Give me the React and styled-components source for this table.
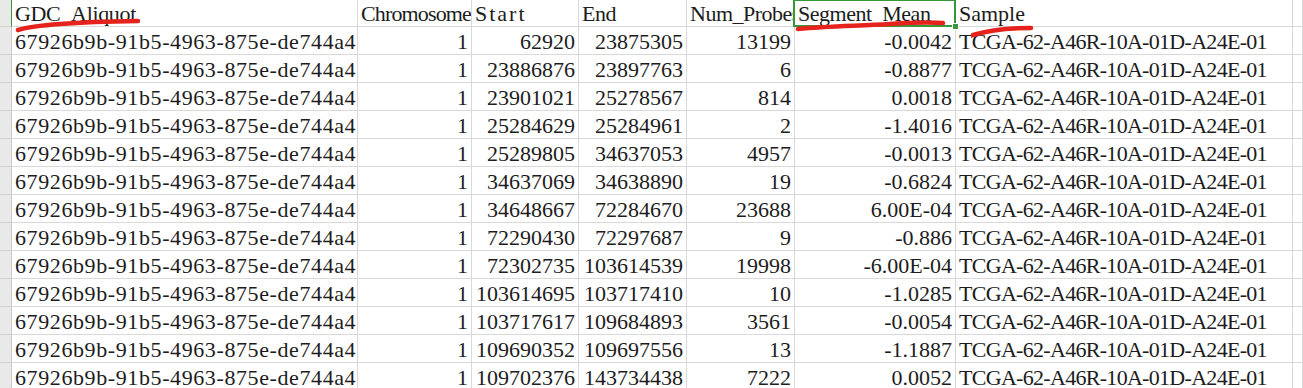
import styled, { createGlobalStyle } from "styled-components";

const GlobalStyle = createGlobalStyle`
  html, body {
    margin: 0;
    padding: 0;
    background: #ffffff;
    overflow: hidden;
  }
`;

const headers = [
  { label: "GDC_Aliquot", ls: -0.34 },
  { label: "Chromosome", ls: -0.86 },
  { label: "Start", ls: 2 },
  { label: "End", ls: -0.5 },
  { label: "Num_Probes", ls: -0.5 },
  { label: "Segment_Mean", ls: -0.47 },
  { label: "Sample", ls: 0 },
];

const aliquot = "67926b9b-91b5-4963-875e-de744a4";
const sample = "TCGA-62-A46R-10A-01D-A24E-01";

// chromosome, start, end, probes, mean
const rows = [
  [1, 62920, 23875305, 13199, "-0.0042"],
  [1, 23886876, 23897763, 6, "-0.8877"],
  [1, 23901021, 25278567, 814, "0.0018"],
  [1, 25284629, 25284961, 2, "-1.4016"],
  [1, 25289805, 34637053, 4957, "-0.0013"],
  [1, 34637069, 34638890, 19, "-0.6824"],
  [1, 34648667, 72284670, 23688, "6.00E-04"],
  [1, 72290430, 72297687, 9, "-0.886"],
  [1, 72302735, 103614539, 19998, "-6.00E-04"],
  [1, 103614695, 103717410, 10, "-1.0285"],
  [1, 103717617, 109684893, 3561, "-0.0054"],
  [1, 109690352, 109697556, 13, "-1.1887"],
  [1, 109702376, 143734438, 7222, "0.0052"],
];

const App = () => {
  return (
    <>
      <GlobalStyle />
      <Sheet>
        <RowHead $selected />
        {headers.map((h) => (
          <Cell key={h.label} $ls={h.ls}>
            {h.label}
          </Cell>
        ))}
        <Cell />

        {rows.map((r, i) => (
          <Row key={i} data={r} />
        ))}

        <Selection>
          <Handle />
        </Selection>
        <Scribbles width="1303" height="60" viewBox="0 0 1303 60">
          <path d="M18 30 C 34 25, 70 22, 138 21" />
          <path d="M798 29 C 830 26, 860 26, 890 24 S 930 22, 943 23" />
          <path d="M973 35 C 990 30, 1010 28, 1031 28" />
        </Scribbles>
      </Sheet>
    </>
  );
};

const Row = ({ data }) => {
  const [chrom, start, end, probes, mean] = data;
  return (
    <>
      <RowHead />
      <Cell $ls={0.6}>{aliquot}</Cell>
      <Cell $align="right">{chrom}</Cell>
      <Cell $align="right">{start}</Cell>
      <Cell $align="right">{end}</Cell>
      <Cell $align="right">{probes}</Cell>
      <Cell $align="right">{mean}</Cell>
      <Cell $ls={-0.7}>{sample}</Cell>
      <Cell />
    </>
  );
};

const Sheet = styled.div`
  position: relative;
  width: 1303px;
  height: 388px;
  overflow: hidden;
  display: grid;
  grid-template-columns: 12px 346px 114px 107px 108px 108px 161px 337px 1fr;
  grid-template-rows: 27px;
  grid-auto-rows: 28px;
  font-family: "Liberation Serif", "DejaVu Serif", serif;
  font-size: 22px;
  color: #1c1c1c;
`;

const RowHead = styled.div`
  background: #e9e9e9;
  border-bottom: 1px solid #d0d0d0;
  border-right: 1px solid ${(p) => (p.$selected ? "#3a963a" : "#c9c9c9")};
`;

const Cell = styled.div`
  display: flex;
  align-items: flex-end;
  justify-content: ${(p) => (p.$align === "right" ? "flex-end" : "flex-start")};
  padding: 0 3px 0 3px;
  line-height: 24px;
  letter-spacing: ${(p) => p.$ls || 0}px;
  white-space: nowrap;
  overflow: hidden;
  border-right: 1px solid #d9d9d9;
  border-bottom: 1px solid #d9d9d9;
`;

const Selection = styled.div`
  position: absolute;
  left: 793px;
  top: -1px;
  width: 159px;
  height: 24px;
  border: 2px solid #3a963a;
  pointer-events: none;
`;

const Handle = styled.div`
  position: absolute;
  right: -5px;
  bottom: -5px;
  width: 5px;
  height: 5px;
  background: #3a963a;
  border: 1px solid #ffffff;
`;

const Scribbles = styled.svg`
  position: absolute;
  left: 0;
  top: 0;
  pointer-events: none;

  path {
    fill: none;
    stroke: #e5221c;
    stroke-width: 4.5;
    stroke-linecap: round;
  }
`;

export default App;
